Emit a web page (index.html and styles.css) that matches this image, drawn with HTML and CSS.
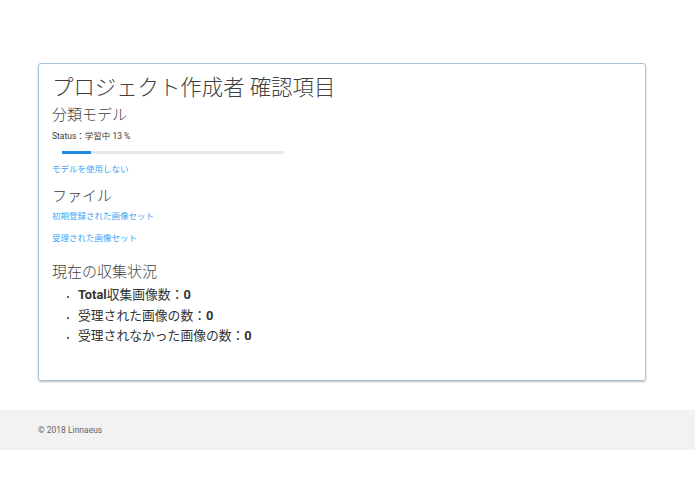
FILE: index.html
```
<!DOCTYPE html>
<html lang="ja">
<head>
<meta charset="utf-8">
<title>プロジェクト作成者 確認項目</title>
<link rel="stylesheet" href="styles.css">
</head>
<body>
<main class="page">
  <section class="card">
    <h1 class="title">プロジェクト作成者 確認項目</h1>
    <h2 class="subtitle">分類モデル</h2>
    <p class="status">Status：学習中 13 %</p>
    <div class="progress"><div class="progress-fill" style="width:13%"></div></div>
    <a class="link link-model" href="#">モデルを使用しない</a>
    <h2 class="subtitle subtitle-files">ファイル</h2>
    <a class="link link-first" href="#">初期登録された画像セット</a>
    <a class="link link-second" href="#">受理された画像セット</a>
    <h2 class="subtitle subtitle-status">現在の収集状況</h2>
    <ul class="stats">
      <li><b>Total</b>収集画像数：<b>0</b></li>
      <li>受理された画像の数：<b>0</b></li>
      <li>受理されなかった画像の数：<b>0</b></li>
    </ul>
  </section>
</main>
<footer class="footer">
  <div class="footer-inner">© 2018 Linnaeus</div>
</footer>
</body>
</html>
```
FILE: styles.css
```
html, body {
  margin: 0;
  padding: 0;
  background: #ffffff;
}
body {
  font-family: Roboto, "Noto Sans CJK JP", "Noto Sans", sans-serif;
  color: #3d3d3d;
}
.page {
  padding-top: 63px;
  padding-left: 38px;
  padding-right: 49px;
}
.card {
  border: 1px solid #a3c3e3;
  border-radius: 3px;
  box-shadow: 0 1px 2px rgba(0, 0, 0, 0.28);
  padding: 11px 13px 33px 13px;
  display: flex;
  flex-direction: column;
  align-items: flex-start;
}
.title {
  margin: 0;
  font-size: 21.4px;
  line-height: 26px;
  font-weight: 300;
  color: #3f3f3f;
}
.subtitle {
  margin: 4px 0 0 0;
  font-size: 15px;
  line-height: 20px;
  font-weight: 300;
  color: #3f3f3f;
}
.status {
  margin: 5px 0 0 0;
  font-size: 8.5px;
  line-height: 12px;
  color: #3a3a3a;
}
.progress {
  margin: 9px 0 0 10px;
  width: 222px;
  height: 3px;
  background: #e8e8e8;
}
.progress-fill {
  height: 100%;
  background: #1e88e5;
}
.link {
  font-size: 8.5px;
  line-height: 12px;
  color: #42a5f5;
  text-decoration: none;
}
.link-model {
  margin-top: 9px;
}
.subtitle-files {
  margin-top: 11px;
}
.link-first {
  margin-top: 4px;
}
.link-second {
  margin-top: 10px;
}
.subtitle-status {
  margin-top: 18px;
}
.stats {
  margin: 3px 0 0 0;
  padding-left: 26px;
  font-size: 12.8px;
  line-height: 20.5px;
  color: #333333;
  list-style: disc;
}
.stats li::marker {
  font-size: 8px;
}
.stats b {
  font-weight: 700;
}
.footer {
  margin-top: 29px;
  background: #f2f2f2;
  height: 40px;
  display: flex;
  align-items: center;
}
.footer-inner {
  padding-left: 38px;
  font-size: 8.5px;
  color: #666666;
}
```
